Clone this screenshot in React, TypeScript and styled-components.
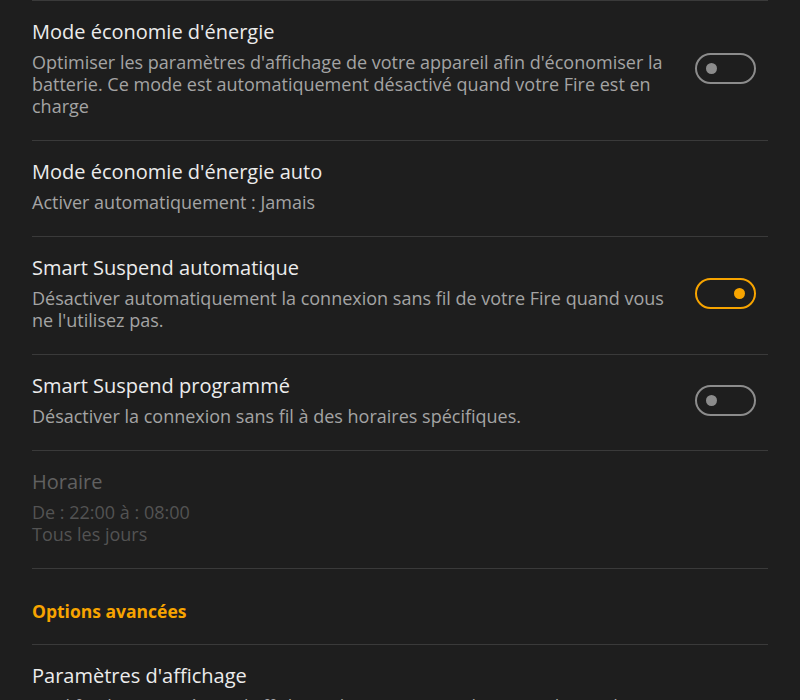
import React from 'react';
import styled, { createGlobalStyle } from 'styled-components';

const GlobalStyle = createGlobalStyle`
	html, body {
		margin: 0;
		padding: 0;
		background: #1e1e1e;
		overflow: hidden;
	}
	body {
		font-family: 'Open Sans', 'Noto Sans', sans-serif;
	}
`;

const Page = styled.div`
	width: 800px;
	height: 700px;
	background: #1e1e1e;
	padding: 0 32px;
	box-sizing: border-box;
	overflow: hidden;
`;

const List = styled.div`
	border-top: 1px solid #3a3a3a;
`;

const Row = styled.div`
	display: flex;
	align-items: center;
	gap: 16px;
	padding: 19px 0 23px;
	border-bottom: 1px solid #3a3a3a;
`;

const TextCol = styled.div`
	flex: 1;
	min-width: 0;
`;

const Title = styled.div<{ $disabled?: boolean }>`
	font-size: 20px;
	line-height: 24px;
	color: ${({ $disabled }) => ($disabled ? '#616161' : '#ececec')};
	margin-bottom: 7px;
`;

const Desc = styled.div<{ $disabled?: boolean }>`
	font-size: 18px;
	line-height: 22px;
	color: ${({ $disabled }) => ($disabled ? '#535353' : '#a4a4a4')};
`;

const SectionHeader = styled.div`
	padding: 31px 0 22px;
	font-size: 17.5px;
	line-height: 22px;
	font-weight: 700;
	color: #f7a400;
	border-bottom: 1px solid #3a3a3a;
`;

const Track = styled.div<{ $on?: boolean }>`
	width: 61px;
	height: 31px;
	box-sizing: border-box;
	border-radius: 16px;
	border: 2.5px solid ${({ $on }) => ($on ? '#f7a400' : '#8c8c8c')};
	display: flex;
	align-items: center;
	justify-content: ${({ $on }) => ($on ? 'flex-end' : 'flex-start')};
	padding: 0 9px;
	flex-shrink: 0;
	margin-right: 12px;
`;

const Knob = styled.div<{ $on?: boolean }>`
	width: 11px;
	height: 11px;
	border-radius: 50%;
	background: ${({ $on }) => ($on ? '#f7a400' : '#8c8c8c')};
`;

type Item = {
	title: string;
	desc: string[];
	toggle?: boolean;
	on?: boolean;
	disabled?: boolean;
};

const items: Item[] = [
	{
		title: "Mode économie d'énergie",
		desc: [
			"Optimiser les paramètres d'affichage de votre appareil afin d'économiser la batterie. Ce mode est automatiquement désactivé quand votre Fire est en charge",
		],
		toggle: true,
	},
	{
		title: "Mode économie d'énergie auto",
		desc: ['Activer automatiquement : Jamais'],
	},
	{
		title: 'Smart Suspend automatique',
		desc: [
			"Désactiver automatiquement la connexion sans fil de votre Fire quand vous ne l'utilisez pas.",
		],
		toggle: true,
		on: true,
	},
	{
		title: 'Smart Suspend programmé',
		desc: ['Désactiver la connexion sans fil à des horaires spécifiques.'],
		toggle: true,
	},
	{
		title: 'Horaire',
		desc: ['De : 22:00 à : 08:00', 'Tous les jours'],
		disabled: true,
	},
];

const Toggle: React.FC<{ on?: boolean }> = ({ on }) => (
	<Track $on={on}>
		<Knob $on={on} />
	</Track>
);

const SettingRow: React.FC<{ item: Item }> = ({ item }) => (
	<Row>
		<TextCol>
			<Title $disabled={item.disabled}>{item.title}</Title>
			{item.desc.map((d) => (
				<Desc key={d} $disabled={item.disabled}>
					{d}
				</Desc>
			))}
		</TextCol>
		{item.toggle && <Toggle on={item.on} />}
	</Row>
);

const App: React.FC = () => (
	<Page>
		<GlobalStyle />
		<List>
			{items.map((item) => (
				<SettingRow key={item.title} item={item} />
			))}
			<SectionHeader>Options avancées</SectionHeader>
			<SettingRow
				item={{
					title: "Paramètres d'affichage",
					desc: ["Modifier les paramètres d'affichage de votre appareil pour prolonger l'autonomie"],
				}}
			/>
		</List>
	</Page>
);

export default App;
